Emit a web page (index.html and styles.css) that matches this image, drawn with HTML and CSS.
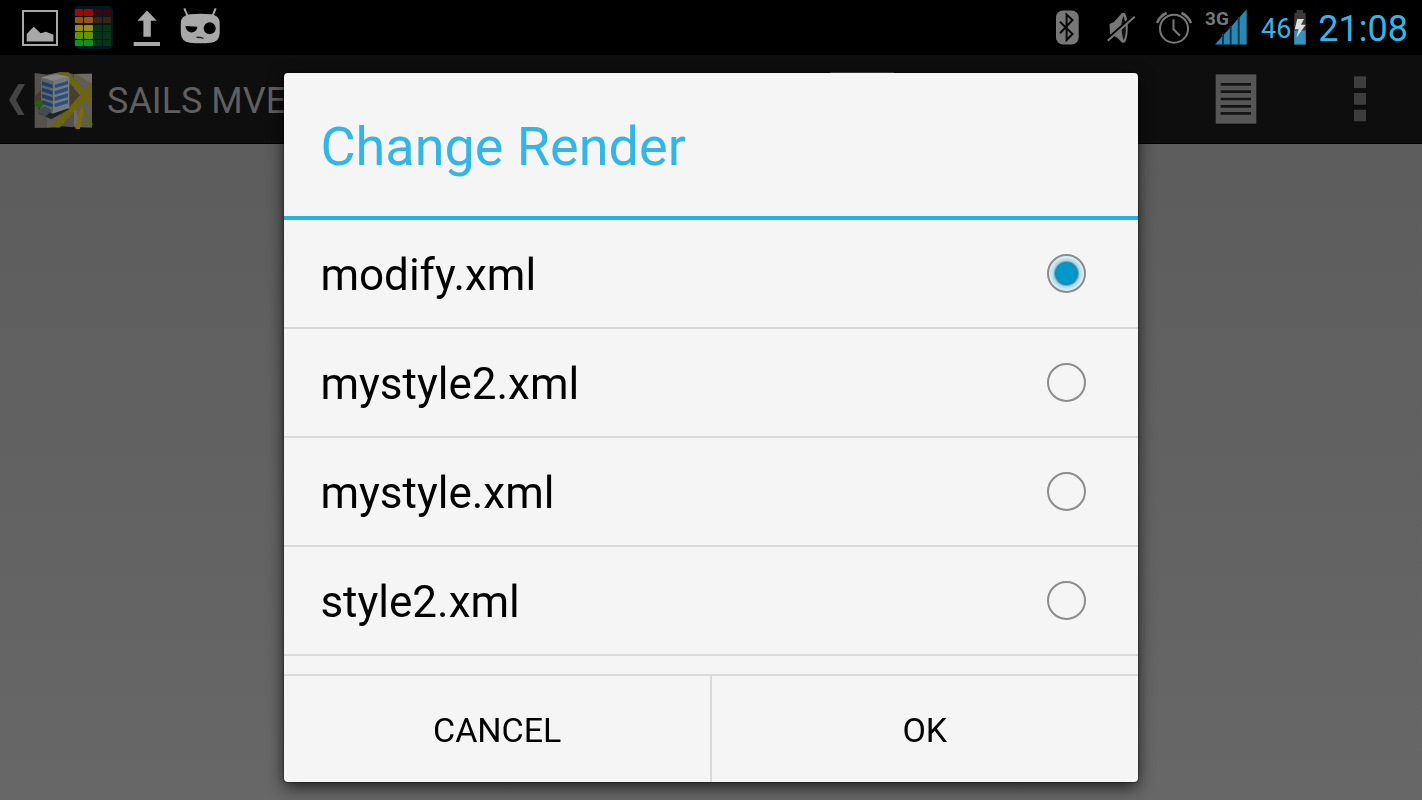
FILE: index.html
```
<!DOCTYPE html>
<html lang="en">
<head>
    <meta charset="UTF-8">
    <meta name="viewport" content="width=device-width, initial-scale=1.0">
    <title>Change Render</title>
    <link rel="stylesheet" href="styles.css">
</head>
<body>
    <header class="status-bar">
        <div class="status-group">
            <svg width="44" height="43" viewBox="0 0 44 43">
                <rect x="5" y="5" width="34" height="34" fill="none" stroke="#a8a8a8" stroke-width="2"/>
                <path d="M8.7 35.4V28l7-7.2 7 6.5 5.3-1.6 7.4 3v6.7z" fill="#a8a8a8"/>
            </svg>
            <svg width="44" height="43" viewBox="0 0 44 43">
                <rect x="3" y="0" width="39" height="43" rx="5" fill="#031722"/>
                <g fill="#9c080c"><rect x="4" y="3" width="8" height="7" rx="1"/><rect x="13" y="3" width="9" height="7" rx="1"/></g>
                <g fill="#3b0608"><rect x="23" y="3" width="8" height="7" rx="1"/><rect x="32" y="3" width="8" height="7" rx="1"/></g>
                <g fill="#9c5408"><rect x="4" y="11" width="8" height="6" rx="1"/><rect x="13" y="11" width="9" height="6" rx="1"/></g>
                <g fill="#3d2409"><rect x="23" y="11" width="8" height="6" rx="1"/><rect x="32" y="11" width="8" height="6" rx="1"/></g>
                <g fill="#96900a"><rect x="4" y="19" width="8" height="6" rx="1"/><rect x="13" y="19" width="9" height="6" rx="1"/></g>
                <g fill="#61940a"><rect x="4" y="26" width="8" height="7" rx="1"/><rect x="13" y="26" width="9" height="7" rx="1"/></g>
                <g fill="#089422"><rect x="4" y="34" width="8" height="6" rx="1"/><rect x="13" y="34" width="9" height="6" rx="1"/></g>
                <g fill="#053812">
                    <rect x="23" y="19" width="8" height="6" rx="1"/><rect x="32" y="19" width="8" height="6" rx="1"/>
                    <rect x="23" y="26" width="8" height="7" rx="1"/><rect x="32" y="26" width="8" height="7" rx="1"/>
                    <rect x="23" y="34" width="8" height="6" rx="1"/><rect x="32" y="34" width="8" height="6" rx="1"/>
                </g>
            </svg>
            <svg width="44" height="43" viewBox="0 0 44 43" fill="#a8a8a8">
                <path d="M23 4.5l9.8 10.3h-6v16h-7.4v-16h-6z"/>
                <rect x="9.7" y="36" width="26.3" height="4"/>
            </svg>
            <svg width="44" height="43" viewBox="0 0 44 43">
                <path d="M7.3 2.3l3.4 8M38.7 2.3l-3.4 8" stroke="#a8a8a8" stroke-width="2"/>
                <path d="M13 8.3Q23.3 7.3 34 8.3 Q42.500 9.500 42.700 17v10Q42.500 35.500 34 36.800 Q23.300 37.800 13 36.800 Q4 35.500 3.800 27V17Q4 9.500 13 8.300z" fill="#a8a8a8"/>
                <path d="M8.500 20l12 .8a6 6 0 0 1-12-.8z"/>
                <circle cx="32.700" cy="22.300" r="6"/>
                <path d="M19.500 31.200l4 .2 3 1" fill="none" stroke="#222" stroke-width="1.500"/>
            </svg>
        </div>

        <div class="status-group">
            <svg width="44" height="43" viewBox="0 0 44 43">
                <rect x="10" y="4.500" width="22.700" height="34" rx="7" fill="#777"/>
                <path d="M14 15.700L26.500 28 20.600 34V8.500l5.900 5.500L14 27.300" fill="none" stroke="#080808" stroke-width="2"/>
            </svg>
            <svg width="44" height="43" viewBox="0 0 44 43">
                <path d="M10.500 18l4.500-2 8-9q3-1.500 4.300 3Q28.800 15 28.800 22.300T27 34.500q-1.500 3.500-4.300 1.800L18 31.500l-7-3.500z" fill="#777"/>
                <path d="M24.500 10q-2.500 5-2 12.500t2.200 11.800q2.300-4.800 2.100-12.200T24.500 10z" fill="#111"/>
                <path d="M8 33.500L35 9.500" stroke="#000" stroke-width="3"/>
                <path d="M8.700 34.700L35.700 10.700" stroke="#777" stroke-width="2"/>
            </svg>
            <svg width="44" height="43" viewBox="0 0 44 43" fill="none" stroke="#777" stroke-width="2">
                <circle cx="22" cy="22.700" r="14"/>
                <path d="M21.500 13.300v10l6.500 6.500"/>
                <path d="M5 17Q8 10 14.500 7M29.500 7Q36 10 39 17" stroke-width="2.500"/>
            </svg>
            <svg width="44" height="43" viewBox="0 0 44 43">
                <path d="M10 38.500L41.700 3.300v35.200z" fill="#2888b1"/>
                <path d="M18 28v11M25.700 20v19M33.700 11v28" stroke="#0d3a4e" stroke-width="2"/>
                <text class="network" x="0" y="19">3G</text>
            </svg>
            <span class="battery">
                <span>46</span>
                <svg width="14" height="43" viewBox="0 0 14 43">
                    <path d="M3.700 4H10v3h2.700v31.500H1.300V7h2.400z" fill="#3a3a3a"/>
                    <path d="M1.300 24.500h11.400v14H1.300z" fill="#3892bb"/>
                    <path d="M4.300 13H11l-3 5.700h4.700L3.300 31.700l2.400-8.400h-4z" fill="#ddd"/>
                </svg>
            </span>
            <time class="clock">21:08</time>
        </div>
    </header>

    <nav class="action-bar">
        <a class="home" href="#">
            <svg width="18" height="32" viewBox="27 249 50 96">
                <path d="M56 252h20l-27 48 27 48H57l-29-48z" fill="#444"/>
            </svg>
            <svg width="60" height="60" viewBox="102 207 180 180">
                <path d="M104 219l39 5 40-8 38 6v160l-38-3-42 4-37 1z" fill="#55524c"/>
                <path d="M221 222l55-1v162l-55-2z" fill="#605d57"/>
                <path d="M143 224l40-8v163l-42 4z" fill="#605d57"/>
                <path d="M228 222l48-1v30zM221 310l24 70-24-2z" fill="#6f6c65"/>
                <path d="M104 290l20-22v56l-20-18zM208 252l32 34-32 36z" fill="#4b3c2b"/>
                <path d="M180 217h26l70 78v24z" fill="#6b650c"/>
                <path d="M276 248v30l-98 105-26-1z" fill="#6b650c"/>
                <path d="M208 252l30 32-30 34z" fill="#4b3c2b"/>
                <path d="M116 340l40-18 54 4-56 32z" fill="#1f2324"/>
                <path d="M123 232l37 11-3 98-34-20z" fill="#5a656d"/>
                <path d="M160 243l48-13v94l-51 17z" fill="#727a80"/>
                <path d="M123 232l46-10 39 8-48 13z" fill="#858581"/>
                <path d="M126 244l32 10v11l-32-10zM126 263l32 10v11l-32-10zM126 282l32 10v11l-32-10zM126 301l32 10v11l-32-10z" fill="#1f3f64"/>
                <path d="M164 254l40-12v11l-40 12zM164 273l40-12v11l-40 12zM164 292l40-12v11l-40 12zM164 311l40-12v11l-40 12z" fill="#2b5078"/>
                <path d="M113 336l20-18 23 13-20 19z" fill="#444a4e"/>
                <path d="M117 312v18" stroke="#3a3424" stroke-width="4"/>
                <ellipse cx="117" cy="311" rx="13" ry="10" fill="#285c17"/>
                <path d="M247 320l27 51-32-2" fill="none" stroke="#5c690c" stroke-width="6"/>
                <path d="M244 318l7 14-12 59-14-6z" fill="#80690a"/>
            </svg>
            <span class="app-title">SAILS MVE</span>
        </a>
        <div class="actions">
            <button class="action map-action" type="button" aria-label="Map">
                <svg width="64" height="54" viewBox="0 0 64 54"><rect width="64" height="54" fill="#555"/></svg>
            </button>
            <button class="action" type="button" aria-label="List">
                <svg width="42" height="50" viewBox="44 225 126 150">
                    <rect x="46" y="226" width="122" height="148" fill="#565656"/>
                    <path d="M61 256h91M61 278h91M61 300h91M61 322h91M61 343h91" stroke="#151515" stroke-width="8"/>
                </svg>
            </button>
            <button class="action" type="button" aria-label="More options">
                <svg width="12" height="46" viewBox="462 231 36 138" fill="#3d3d3d">
                    <path d="M462 232h36v35h-36zM462 282h36v35h-36zM462 332h36v35h-36z"/>
                </svg>
            </button>
        </div>
    </nav>

    <main class="overlay">
        <form class="dialog" role="dialog" aria-labelledby="dialogTitle">
            <h1 class="dialog-title" id="dialogTitle">Change Render</h1>
            <div class="options">
                <label class="option">
                    <span>modify.xml</span>
                    <input type="radio" name="render" value="modify.xml" checked>
                </label>
                <label class="option">
                    <span>mystyle2.xml</span>
                    <input type="radio" name="render" value="mystyle2.xml">
                </label>
                <label class="option">
                    <span>mystyle.xml</span>
                    <input type="radio" name="render" value="mystyle.xml">
                </label>
                <label class="option">
                    <span>style2.xml</span>
                    <input type="radio" name="render" value="style2.xml">
                </label>
            </div>
            <div class="buttons">
                <button type="button">CANCEL</button>
                <button type="button">OK</button>
            </div>
        </form>
    </main>
</body>
</html>
```
FILE: styles.css
```
* {
    box-sizing: border-box;
}
body {
    margin: 0;
    min-height: 100vh;
    display: flex;
    flex-direction: column;
    font-family: Roboto, sans-serif;
    background: linear-gradient(#5a5a5a, #676767);
}
svg {
    display: block;
    flex: none;
}

/* status bar */
.status-bar {
    display: flex;
    justify-content: space-between;
    align-items: center;
    height: 55px;
    padding: 0 14px 0 18px;
    background: #000;
    color: #33b5e5;
}
.status-group {
    display: flex;
    align-items: center;
    gap: 9px;
}
.network {
    font-size: 19px;
    font-weight: bold;
    fill: #777;
}
.battery {
    display: flex;
    align-items: center;
    gap: 2px;
    margin: 0 2px 0 3px;
    font-size: 27px;
}
.battery span,
.clock {
    padding-top: 3px;
}
.clock {
    font-size: 36px;
    line-height: 40px;
}

/* action bar */
.action-bar {
    display: flex;
    justify-content: space-between;
    height: 89px;
    background: #0e0e0e;
    border-bottom: 1px solid #000;
}
.home {
    display: flex;
    align-items: center;
    padding-left: 8px;
    color: #5f5f5f;
    text-decoration: none;
}
.home svg + svg {
    margin-left: 8px;
}
.app-title {
    margin-left: 13px;
    padding-top: 4px;
    font-size: 36px;
    white-space: nowrap;
}
.actions {
    display: flex;
}
.action {
    display: flex;
    justify-content: center;
    align-items: center;
    width: 124px;
    padding: 0;
    border: none;
    background: none;
}
.map-action {
    margin-right: 250px;
}

/* dialog, centred in the space under the status bar */
.overlay {
    position: fixed;
    top: 55px;
    right: 0;
    bottom: 0;
    left: 0;
    display: flex;
    justify-content: center;
    align-items: center;
}
.dialog {
    width: 60%;
    border-radius: 4px;
    background: #f5f5f5;
    box-shadow: 0 0 2px #000, 0 5px 16px rgba(0, 0, 0, 0.7);
    overflow: hidden;
}
.dialog-title {
    margin: 0;
    padding: 44px 36px 39px;
    border-bottom: 4px solid #22b3e8;
    color: #33b5e5;
    font-size: 54px;
    font-weight: normal;
    line-height: 60px;
}
.options {
    padding-bottom: 18px;
}
.option {
    display: flex;
    justify-content: space-between;
    align-items: center;
    height: 109px;
    padding: 0 52px 0 36px;
    border-bottom: 2px solid #dadada;
    color: #000;
    font-size: 44px;
}
.option span {
    padding-top: 3px;
}
.option input {
    appearance: none;
    width: 39px;
    height: 39px;
    margin: 0;
    border: 2px solid #8c8c8c;
    border-radius: 50%;
}
.option input:checked {
    background: radial-gradient(circle, #0099cc 9px, #2b84a3 11px, #a5d8eb 13px, #e2eff4 17px);
}
.buttons {
    display: flex;
    border-top: 2px solid #dadada;
}
.buttons button {
    flex: 1;
    height: 106px;
    padding: 2px 0 0;
    border: none;
    background: none;
    color: #000;
    font-family: inherit;
    font-size: 34px;
}
.buttons button:first-child {
    border-right: 2px solid #dadada;
}
```
